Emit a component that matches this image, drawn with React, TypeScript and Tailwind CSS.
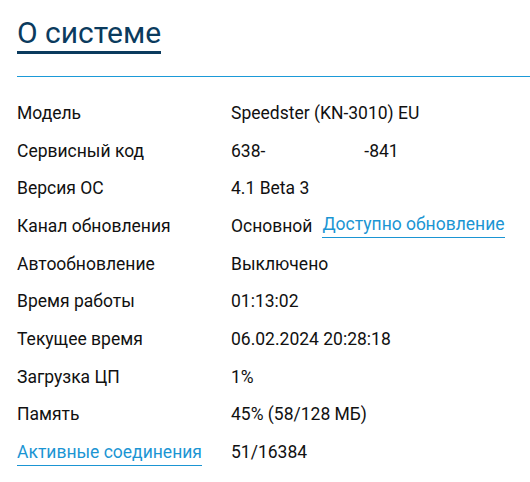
const rows: { label: string; value: React.ReactNode; labelLink?: boolean }[] = [
  { label: 'Модель', value: 'Speedster (KN-3010) EU' },
  {
    label: 'Сервисный код',
    value: (
      <span className="flex items-center">
        <span>638-</span>
        <span className="inline-block w-[99px]" />
        <span>-841</span>
      </span>
    ),
  },
  { label: 'Версия ОС', value: '4.1 Beta 3' },
  {
    label: 'Канал обновления',
    value: (
      <span className="flex items-center gap-[10px]">
        <span>Основной</span>
        <a className="text-[#1b95d3] border-b border-[#1b95d3] pb-[3px] cursor-pointer">
          Доступно обновление
        </a>
      </span>
    ),
  },
  { label: 'Автообновление', value: 'Выключено' },
  { label: 'Время работы', value: '01:13:02' },
  { label: 'Текущее время', value: '06.02.2024 20:28:18' },
  { label: 'Загрузка ЦП', value: '1%' },
  { label: 'Память', value: '45% (58/128 МБ)' },
  { label: 'Активные соединения', value: '51/16384', labelLink: true },
];

export default function App() {
  return (
    <div className="w-[530px] h-[482px] bg-white pl-[17px] text-[#111] font-['Roboto',sans-serif] overflow-hidden">
      <div className="pt-[15px] pb-[22px] border-b border-[#1b9ad8]">
        <h1 className="inline-block text-[30px] leading-[35px] text-[#0b3b5e] border-b-[3px] border-[#0b3b5e] pb-[1px]">
          О системе
        </h1>
      </div>

      <div className="pt-[17px] flex flex-col">
        {rows.map((r) => (
          <div key={r.label} className="flex items-center h-[37.7px] text-[17.5px] leading-[20px]">
            <div className="w-[214px] shrink-0">
              {r.labelLink ? (
                <a className="text-[#1b95d3] border-b border-[#1b95d3] pb-[3px] cursor-pointer">{r.label}</a>
              ) : (
                r.label
              )}
            </div>
            <div>{r.value}</div>
          </div>
        ))}
      </div>
    </div>
  );
}
